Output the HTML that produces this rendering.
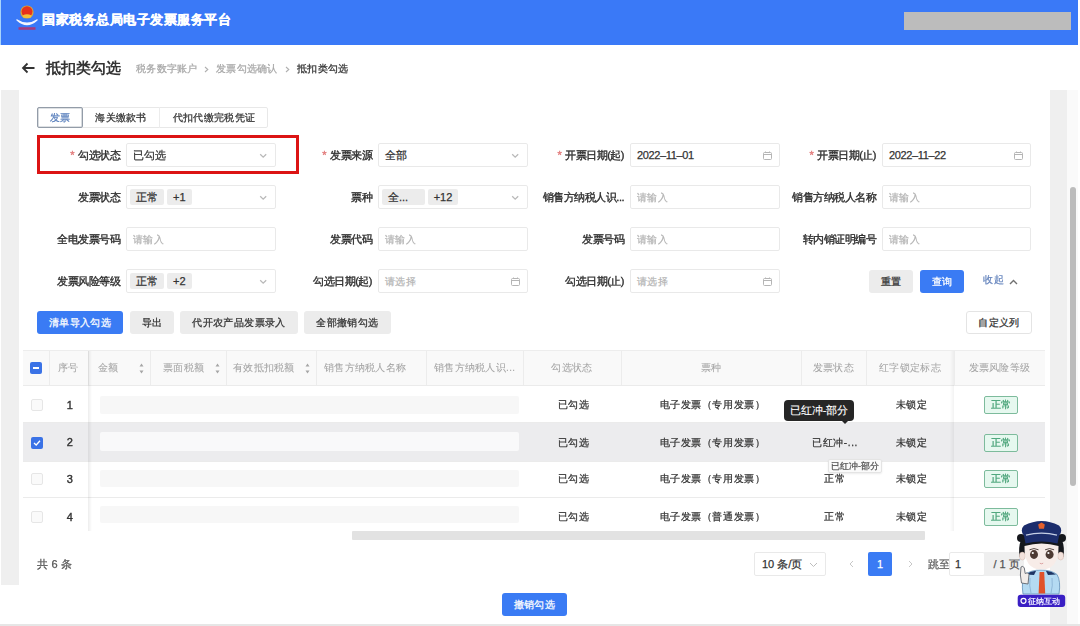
<!DOCTYPE html>
<html><head><meta charset="utf-8">
<style>
*{box-sizing:border-box;margin:0;padding:0}
html,body{width:1080px;height:626px;overflow:hidden;background:#fff;font-family:"Liberation Sans",sans-serif;color:#333;position:relative}
body{-webkit-text-stroke:0.25px}
.a{position:absolute}
.strip{background:#efefef}
.bc{top:62px;font-size:10px;color:#a8a8a8;line-height:13px;white-space:nowrap;letter-spacing:0.3px}
.lbl{font-size:11px;letter-spacing:-0.5px;color:#2e2e2e;-webkit-text-stroke:0.35px;text-align:right;line-height:24px;white-space:nowrap}
.req{color:#e27b7b;margin-right:4px}
.inp{height:24px;border:1px solid #e9e9e9;border-radius:2px;background:#fff;font-size:11px;line-height:22px;padding-left:6px;white-space:nowrap}
.ph{color:#b3b3b3;-webkit-text-stroke:0.2px;font-size:10px;letter-spacing:0.4px}
.tag{display:inline-block;background:#ececec;height:16px;line-height:16px;padding:0 6px;font-size:11px;color:#333;vertical-align:top;margin-top:3px;margin-right:3px;border-radius:2px}
.btn{height:23px;line-height:23px;font-size:10px;letter-spacing:0.4px;text-align:center;border-radius:3px;white-space:nowrap}
.pri{background:#3a7bf4;color:#fff}
.gry{background:#ececec;color:#333}
.th{top:350px;height:36px;line-height:36px;font-size:10px;letter-spacing:0.3px;color:#a3a3a3;white-space:nowrap;-webkit-text-stroke:0.05px}
.td{padding-left:3px;font-size:10px;letter-spacing:0.6px;-webkit-text-stroke:0.25px;color:#333;text-align:center;white-space:nowrap;line-height:14px}
</style></head><body>
<div class="a" style="left:0;top:0;width:1080px;height:626px;overflow:hidden;filter:blur(0.4px)">
<div class="a" style="left:0;top:0;width:1078px;height:45px;background:#3a79f7"></div>
<div class="a" style="left:0;top:0;width:1px;height:45px;background:#a9d4fb"></div>
<svg class="a" style="left:14px;top:3px" width="26" height="31" viewBox="0 0 26 31">
  <circle cx="13" cy="9" r="6.6" fill="#d9a43a"/>
  <circle cx="13" cy="8.6" r="5.4" fill="#e8321c"/>
  <path d="M8.5 12.5 Q13 10 17.5 12.5 L17 14.5 Q13 15.5 9 14.5Z" fill="#f2c23a"/>
  <path d="M2.5 16 Q13 23 23.5 16 L23.5 17.5 Q13 27 2.5 17.5Z" fill="#f4f6ff"/>
  <path d="M4.5 25.5 H21.5" stroke="#b8306a" stroke-width="2.6" opacity="0.85"/>
</svg>
<div class="a" style="left:42px;top:11px;font-size:13px;font-weight:bold;color:#fff;letter-spacing:0.5px;line-height:17px;white-space:nowrap;-webkit-text-stroke:0.3px">国家税务总局电子发票服务平台</div>
<div class="a" style="left:904px;top:12px;width:167px;height:18px;background:#bcbcbc"></div>
<svg class="a" style="left:21px;top:62px" width="15" height="12" viewBox="0 0 15 12"><path d="M13.5 6H2 M6.5 1.5L2 6L6.5 10.5" stroke="#333" stroke-width="1.8" fill="none"/></svg>
<div class="a" style="left:46px;top:58px;font-size:15px;font-weight:bold;color:#333;line-height:20px;-webkit-text-stroke:0">抵扣类勾选</div>
<div class="a bc" style="left:136px">税务数字账户</div>
<svg class="a" style="left:204px;top:66px" width="5" height="7" viewBox="0 0 5 7"><path d="M1 1L3.8 3.5L1 6" stroke="#b0b0b0" stroke-width="1.1" fill="none"/></svg>
<div class="a bc" style="left:216px">发票勾选确认</div>
<svg class="a" style="left:285px;top:66px" width="5" height="7" viewBox="0 0 5 7"><path d="M1 1L3.8 3.5L1 6" stroke="#b0b0b0" stroke-width="1.1" fill="none"/></svg>
<div class="a bc" style="left:297px;color:#333">抵扣类勾选</div>
<div class="a strip" style="left:1px;top:90px;width:18px;height:495px"></div>
<div class="a strip" style="left:1050px;top:90px;width:17px;height:534px"></div>
<div class="a" style="left:1067px;top:90px;width:11px;height:534px;background:#fafafa"></div>
<div class="a" style="left:1070px;top:187px;width:6px;height:299px;background:#bcbcbc;border-radius:3px"></div>
<div class="a" style="left:0;top:624px;width:1080px;height:2px;background:#e6e6e6"></div>
<div class="a" style="left:37px;top:107px;width:231px;height:21px;border:1px solid #e8e8e8;border-radius:2px"></div>
<div class="a" style="left:37px;top:107px;width:46px;height:21px;border:1px solid #939ca8;box-shadow:inset 0 0 0 0.6px rgba(147,156,168,0.6);border-radius:2px;color:#5b80bd;font-size:10px;letter-spacing:0.3px;line-height:19px;text-align:center">发票</div>
<div class="a" style="left:83px;top:107px;width:77px;height:21px;border-right:1px solid #ececec;font-size:10px;letter-spacing:0.3px;line-height:21px;text-align:center;color:#333">海关缴款书</div>
<div class="a" style="left:160px;top:107px;width:108px;height:21px;font-size:10px;letter-spacing:0.3px;line-height:21px;text-align:center;color:#333">代扣代缴完税凭证</div>
<div class="a" style="left:37px;top:135px;width:262px;height:39px;border:3px solid #dc1414"></div>
<div class="a lbl" style="left:0px;top:143px;width:120px"><span class="req">*</span>勾选状态</div>
<div class="a inp" style="left:126px;top:143px;width:150px">已勾选</div>
<svg class="a" style="left:259px;top:153px" width="9" height="6" viewBox="0 0 9 6"><path d="M1.2 1.2L4.2 4.2L7.2 1.2" stroke="#b9b9b9" stroke-width="1.3" fill="none"/></svg>
<div class="a lbl" style="left:252px;top:143px;width:120px"><span class="req">*</span>发票来源</div>
<div class="a inp" style="left:378px;top:143px;width:150px">全部</div>
<svg class="a" style="left:511px;top:153px" width="9" height="6" viewBox="0 0 9 6"><path d="M1.2 1.2L4.2 4.2L7.2 1.2" stroke="#b9b9b9" stroke-width="1.3" fill="none"/></svg>
<div class="a lbl" style="left:504px;top:143px;width:120px"><span class="req">*</span>开票日期(起)</div>
<div class="a inp" style="left:630px;top:143px;width:150px"><span style="letter-spacing:-0.35px">2022–11–01</span></div>
<svg class="a" style="left:763px;top:151px" width="9" height="9" viewBox="0 0 9 9"><rect x="0.5" y="1.5" width="8" height="7" rx="1" stroke="#b5b5b5" fill="none"/><path d="M0.5 3.5H8.5M2.5 0.5V2M6.5 0.5V2" stroke="#b5b5b5"/></svg>
<div class="a lbl" style="left:756px;top:143px;width:120px"><span class="req">*</span>开票日期(止)</div>
<div class="a inp" style="left:882px;top:143px;width:149px"><span style="letter-spacing:-0.35px">2022–11–22</span></div>
<svg class="a" style="left:1014px;top:151px" width="9" height="9" viewBox="0 0 9 9"><rect x="0.5" y="1.5" width="8" height="7" rx="1" stroke="#b5b5b5" fill="none"/><path d="M0.5 3.5H8.5M2.5 0.5V2M6.5 0.5V2" stroke="#b5b5b5"/></svg>
<div class="a lbl" style="left:0px;top:185px;width:120px">发票状态</div>
<div class="a inp" style="left:126px;top:185px;width:150px"><span style="margin-left:-3px"></span><span class="tag">正常</span><span class="tag">+1</span></div>
<svg class="a" style="left:259px;top:195px" width="9" height="6" viewBox="0 0 9 6"><path d="M1.2 1.2L4.2 4.2L7.2 1.2" stroke="#b9b9b9" stroke-width="1.3" fill="none"/></svg>
<div class="a lbl" style="left:252px;top:185px;width:120px">票种</div>
<div class="a inp" style="left:378px;top:185px;width:150px"><span style="margin-left:-3px"></span><span class="tag" style="width:43px;padding-left:6px">全...</span><span class="tag" style="width:30px;text-align:center;padding:0">+12</span></div>
<svg class="a" style="left:511px;top:195px" width="9" height="6" viewBox="0 0 9 6"><path d="M1.2 1.2L4.2 4.2L7.2 1.2" stroke="#b9b9b9" stroke-width="1.3" fill="none"/></svg>
<div class="a lbl" style="left:504px;top:185px;width:120px">销售方纳税人识...</div>
<div class="a inp" style="left:630px;top:185px;width:150px"><span class="ph">请输入</span></div>
<div class="a lbl" style="left:756px;top:185px;width:120px">销售方纳税人名称</div>
<div class="a inp" style="left:882px;top:185px;width:149px"><span class="ph">请输入</span></div>
<div class="a lbl" style="left:0px;top:227px;width:120px">全电发票号码</div>
<div class="a inp" style="left:126px;top:227px;width:150px"><span class="ph">请输入</span></div>
<div class="a lbl" style="left:252px;top:227px;width:120px">发票代码</div>
<div class="a inp" style="left:378px;top:227px;width:150px"><span class="ph">请输入</span></div>
<div class="a lbl" style="left:504px;top:227px;width:120px">发票号码</div>
<div class="a inp" style="left:630px;top:227px;width:150px"><span class="ph">请输入</span></div>
<div class="a lbl" style="left:756px;top:227px;width:120px">转内销证明编号</div>
<div class="a inp" style="left:882px;top:227px;width:149px"><span class="ph">请输入</span></div>
<div class="a lbl" style="left:0px;top:269px;width:120px">发票风险等级</div>
<div class="a inp" style="left:126px;top:269px;width:150px"><span style="margin-left:-3px"></span><span class="tag">正常</span><span class="tag">+2</span></div>
<svg class="a" style="left:259px;top:279px" width="9" height="6" viewBox="0 0 9 6"><path d="M1.2 1.2L4.2 4.2L7.2 1.2" stroke="#b9b9b9" stroke-width="1.3" fill="none"/></svg>
<div class="a lbl" style="left:252px;top:269px;width:120px">勾选日期(起)</div>
<div class="a inp" style="left:378px;top:269px;width:150px"><span class="ph">请选择</span></div>
<svg class="a" style="left:511px;top:277px" width="9" height="9" viewBox="0 0 9 9"><rect x="0.5" y="1.5" width="8" height="7" rx="1" stroke="#b5b5b5" fill="none"/><path d="M0.5 3.5H8.5M2.5 0.5V2M6.5 0.5V2" stroke="#b5b5b5"/></svg>
<div class="a lbl" style="left:504px;top:269px;width:120px">勾选日期(止)</div>
<div class="a inp" style="left:630px;top:269px;width:150px"><span class="ph">请选择</span></div>
<svg class="a" style="left:763px;top:277px" width="9" height="9" viewBox="0 0 9 9"><rect x="0.5" y="1.5" width="8" height="7" rx="1" stroke="#b5b5b5" fill="none"/><path d="M0.5 3.5H8.5M2.5 0.5V2M6.5 0.5V2" stroke="#b5b5b5"/></svg>
<div class="a btn gry" style="left:869px;top:270px;width:44px">重置</div>
<div class="a btn pri" style="left:920px;top:270px;width:44px">查询</div>
<div class="a" style="left:983px;top:273px;font-size:10px;letter-spacing:0.5px;color:#6a88bf;line-height:14px">收起</div>
<svg class="a" style="left:1009px;top:279px" width="9" height="6" viewBox="0 0 9 6"><path d="M1 5L4.5 1.5L8 5" stroke="#707070" stroke-width="1.4" fill="none"/></svg>
<div class="a btn pri" style="left:37px;top:311px;width:86px">清单导入勾选</div>
<div class="a btn gry" style="left:130px;top:311px;width:44px">导出</div>
<div class="a btn gry" style="left:180px;top:311px;width:118px">代开农产品发票录入</div>
<div class="a btn gry" style="left:304px;top:311px;width:87px">全部撤销勾选</div>
<div class="a btn" style="left:966px;top:311px;width:66px;border:1px solid #e4e4e4;background:#fff;line-height:21px">自定义列</div>
<div class="a" style="left:23px;top:350px;width:1022px;height:36px;background:#f9f9f9;border-top:1px solid #ededed;border-bottom:1px solid #ebebeb"></div>
<div class="a" style="left:49px;top:351px;width:1px;height:34px;background:#ececec"></div>
<div class="a" style="left:88px;top:351px;width:1px;height:34px;background:#ececec"></div>
<div class="a" style="left:150px;top:351px;width:1px;height:34px;background:#ececec"></div>
<div class="a" style="left:226px;top:351px;width:1px;height:34px;background:#ececec"></div>
<div class="a" style="left:316px;top:351px;width:1px;height:34px;background:#ececec"></div>
<div class="a" style="left:426px;top:351px;width:1px;height:34px;background:#ececec"></div>
<div class="a" style="left:523px;top:351px;width:1px;height:34px;background:#ececec"></div>
<div class="a" style="left:621px;top:351px;width:1px;height:34px;background:#ececec"></div>
<div class="a" style="left:801px;top:351px;width:1px;height:34px;background:#ececec"></div>
<div class="a" style="left:866px;top:351px;width:1px;height:34px;background:#ececec"></div>
<div class="a" style="left:954px;top:351px;width:1px;height:34px;background:#ececec"></div>
<div class="a" style="left:30px;top:362px;width:12px;height:12px;background:#3a72e6;border-radius:2px"><div class="a" style="left:3px;top:5px;width:6px;height:2px;background:#fff"></div></div>
<div class="a th" style="left:49px;width:39px;text-align:center">序号</div>
<div class="a th" style="left:98px">金额</div>
<svg class="a" style="left:139px;top:363px" width="5" height="11" viewBox="0 0 5 11"><path d="M0.5 3.5L2.5 0.5L4.5 3.5Z M0.5 7.5L2.5 10.5L4.5 7.5Z" fill="#a6a6a6"/></svg>
<div class="a th" style="left:163px">票面税额</div>
<svg class="a" style="left:215px;top:363px" width="5" height="11" viewBox="0 0 5 11"><path d="M0.5 3.5L2.5 0.5L4.5 3.5Z M0.5 7.5L2.5 10.5L4.5 7.5Z" fill="#a6a6a6"/></svg>
<div class="a th" style="left:233px">有效抵扣税额</div>
<svg class="a" style="left:305px;top:363px" width="5" height="11" viewBox="0 0 5 11"><path d="M0.5 3.5L2.5 0.5L4.5 3.5Z M0.5 7.5L2.5 10.5L4.5 7.5Z" fill="#a6a6a6"/></svg>
<div class="a th" style="left:324px">销售方纳税人名称</div>
<div class="a th" style="left:434px">销售方纳税人识...</div>
<div class="a th" style="left:523px;width:98px;text-align:center">勾选状态</div>
<div class="a th" style="left:621px;width:180px;text-align:center">票种</div>
<div class="a th" style="left:801px;width:65px;text-align:center">发票状态</div>
<div class="a th" style="left:866px;width:88px;text-align:center">红字锁定标志</div>
<div class="a th" style="left:954px;width:91px;text-align:center">发票风险等级</div>
<div class="a" style="left:23px;top:422px;width:1022px;height:1px;background:#ebebeb"></div>
<div class="a" style="left:31px;top:399px;width:12px;height:12px;border:1px solid #e6e6e6;border-radius:2px;background:#fafafa"></div>
<div class="a td" style="left:49px;width:39px;top:398px;font-size:11px;-webkit-text-stroke:0.4px;color:#333">1</div>
<div class="a" style="left:100px;top:396px;width:419px;height:18px;background:#f7f7f7;border-radius:2px"></div>
<div class="a td" style="left:523px;width:98px;top:398px">已勾选</div>
<div class="a td" style="left:621px;width:180px;top:398px">电子发票（专用发票）</div>
<div class="a td" style="left:866px;width:88px;top:398px">未锁定</div>
<div class="a" style="left:984px;top:396px;width:34px;height:18px;border:1px solid #7dbb9c;background:#e6f8ef;border-radius:2px;color:#3f9d70;font-size:10px;line-height:16px;text-align:center">正常</div>
<div class="a" style="left:23px;top:423px;width:1022px;height:39px;background:#ececee"></div>
<div class="a" style="left:23px;top:461px;width:1022px;height:1px;background:#ebebeb"></div>
<div class="a" style="left:31px;top:437px;width:12px;height:12px;background:#3a72e6;border-radius:2px"><svg class="a" style="left:2px;top:2px" width="8" height="8" viewBox="0 0 8 8"><path d="M1 4L3.2 6L7 1.8" stroke="#fff" stroke-width="1.3" fill="none"/></svg></div>
<div class="a td" style="left:49px;width:39px;top:435px;font-size:11px;-webkit-text-stroke:0.4px;color:#333">2</div>
<div class="a" style="left:100px;top:432px;width:419px;height:19px;background:#f9f9fa;border-radius:2px"></div>
<div class="a td" style="left:523px;width:98px;top:436px">已勾选</div>
<div class="a td" style="left:621px;width:180px;top:436px">电子发票（专用发票）</div>
<div class="a td" style="left:801px;width:65px;top:436px">已红冲-...</div>
<div class="a td" style="left:866px;width:88px;top:436px">未锁定</div>
<div class="a" style="left:984px;top:434px;width:34px;height:18px;border:1px solid #7dbb9c;background:#e6f8ef;border-radius:2px;color:#3f9d70;font-size:10px;line-height:16px;text-align:center">正常</div>
<div class="a" style="left:23px;top:497px;width:1022px;height:1px;background:#ebebeb"></div>
<div class="a" style="left:31px;top:473px;width:12px;height:12px;border:1px solid #e6e6e6;border-radius:2px;background:#fafafa"></div>
<div class="a td" style="left:49px;width:39px;top:472px;font-size:11px;-webkit-text-stroke:0.4px;color:#333">3</div>
<div class="a" style="left:100px;top:470px;width:419px;height:17px;background:#f7f7f7;border-radius:2px"></div>
<div class="a td" style="left:523px;width:98px;top:472px">已勾选</div>
<div class="a td" style="left:621px;width:180px;top:472px">电子发票（专用发票）</div>
<div class="a td" style="left:801px;width:65px;top:472px">正常</div>
<div class="a td" style="left:866px;width:88px;top:472px">未锁定</div>
<div class="a" style="left:984px;top:470px;width:34px;height:18px;border:1px solid #7dbb9c;background:#e6f8ef;border-radius:2px;color:#3f9d70;font-size:10px;line-height:16px;text-align:center">正常</div>
<div class="a" style="left:31px;top:511px;width:12px;height:12px;border:1px solid #e6e6e6;border-radius:2px;background:#fafafa"></div>
<div class="a td" style="left:49px;width:39px;top:510px;font-size:11px;-webkit-text-stroke:0.4px;color:#333">4</div>
<div class="a" style="left:100px;top:506px;width:419px;height:17px;background:#f7f7f7;border-radius:2px"></div>
<div class="a td" style="left:523px;width:98px;top:510px">已勾选</div>
<div class="a td" style="left:621px;width:180px;top:510px">电子发票（普通发票）</div>
<div class="a td" style="left:801px;width:65px;top:510px">正常</div>
<div class="a td" style="left:866px;width:88px;top:510px">未锁定</div>
<div class="a" style="left:984px;top:508px;width:34px;height:18px;border:1px solid #7dbb9c;background:#e6f8ef;border-radius:2px;color:#3f9d70;font-size:10px;line-height:16px;text-align:center">正常</div>
<div class="a" style="left:88px;top:351px;width:4px;height:180px;background:linear-gradient(to right,rgba(0,0,0,0.07),rgba(0,0,0,0))"></div>
<div class="a" style="left:950px;top:351px;width:4px;height:180px;background:linear-gradient(to left,rgba(0,0,0,0.05),rgba(0,0,0,0))"></div>
<div class="a" style="left:352px;top:531px;width:573px;height:9px;background:#e2e2e2;border-radius:1px"></div>
<div class="a" style="left:784px;top:400px;width:70px;height:21px;background:#262626;border-radius:4px;color:#fff;font-size:11px;line-height:21px;text-align:center;-webkit-text-stroke:0.15px">已红冲-部分</div>
<div class="a" style="left:841px;top:420px;width:0;height:0;border-left:4px solid transparent;border-right:4px solid transparent;border-top:4px solid #262626"></div>
<div class="a" style="left:828px;top:459px;width:54px;height:14px;background:#fafafa;border:1px solid #e4e4e4;border-radius:2px;box-shadow:0 1px 2px rgba(0,0,0,0.08);color:#555;font-size:9px;line-height:12px;text-align:center">已红冲-部分</div>
<div class="a" style="left:37px;top:557px;font-size:11px;color:#555;line-height:14px;word-spacing:0.5px">共 6 条</div>
<div class="a inp" style="left:754px;top:552px;width:72px;height:24px;line-height:22px;padding-left:7px">10 条/页</div>
<svg class="a" style="left:809px;top:562px" width="9" height="6" viewBox="0 0 9 6"><path d="M1 1L4.5 4.5L8 1" stroke="#bdbdbd" stroke-width="1" fill="none"/></svg>
<svg class="a" style="left:849px;top:560px" width="5" height="8" viewBox="0 0 5 8"><path d="M4 1L1 4L4 7" stroke="#c8c8c8" fill="none"/></svg>
<div class="a" style="left:868px;top:552px;width:24px;height:24px;background:#3a7bf4;border-radius:2px;color:#fff;font-size:11px;line-height:24px;text-align:center">1</div>
<svg class="a" style="left:908px;top:560px" width="5" height="8" viewBox="0 0 5 8"><path d="M1 1L4 4L1 7" stroke="#c8c8c8" fill="none"/></svg>
<div class="a" style="left:928px;top:557px;font-size:11px;color:#666;line-height:14px">跳至</div>
<div class="a inp" style="left:949px;top:552px;width:36px;height:24px;line-height:22px;padding-left:5px">1</div>
<div class="a" style="left:984px;top:552px;width:40px;height:24px;background:#efefef;font-size:11px;color:#555;line-height:24px;padding-left:9.5px;white-space:nowrap">/ 1 页</div>
<div class="a btn pri" style="left:502px;top:593px;width:65px;height:23px;line-height:23px">撤销勾选</div>
<svg class="a" style="left:1012px;top:516px" width="60" height="95" viewBox="1012 516 60 95">
  <!-- body -->
  <path d="M1023 594 Q1021 581 1025 574.5 Q1031 570 1041 570 Q1051 570 1057 574.5 Q1061 581 1059 594Z" fill="#b4daf2" stroke="#5f8fb8" stroke-width="0.8"/>
  <path d="M1030 578 Q1029 586 1031 593 M1052 578 Q1053 586 1051 593" stroke="#7fa8cc" stroke-width="0.7" fill="none"/>
  <path d="M1026 574.5 Q1031 570.5 1036 571 L1034 575Z M1056 574.5 Q1051 570.5 1046 571 L1048 575Z" fill="#1e3564"/>
  <path d="M1039.6 572 L1044.2 572 L1045.2 593.5 L1038.6 593.5Z" fill="#e0522a"/>
  <!-- hand -->
  <path d="M1021.5 583 Q1019.5 575 1021 567 Q1023 565 1024.3 568 L1025.2 573.5 Q1027.5 571.5 1029 574.5 L1028 584Z" fill="#f1ece9" stroke="#60656e" stroke-width="0.9"/>
  <!-- hair back -->
  <path d="M1019.5 557 Q1017 537 1030 530 Q1041.5 525 1053 530 Q1066 537 1063.5 557 Q1041.5 546 1019.5 557Z" fill="#15171c"/>
  <circle cx="1021" cy="538" r="4" fill="#15171c"/>
  <circle cx="1062" cy="538" r="4" fill="#15171c"/>
  <!-- ears -->
  <ellipse cx="1022.3" cy="556" rx="3" ry="4" fill="#f3e2dc" stroke="#c9a9a0" stroke-width="0.4"/>
  <ellipse cx="1060.7" cy="556" rx="3" ry="4" fill="#f3e2dc" stroke="#c9a9a0" stroke-width="0.4"/>
  <!-- face -->
  <path d="M1024.5 546 Q1024 569.5 1041.5 569.5 Q1059 569.5 1058.5 546 Q1041.5 541 1024.5 546Z" fill="#f7ece8"/>
  <!-- eyes -->
  <ellipse cx="1034" cy="554.5" rx="4" ry="4.4" fill="#4e3a33"/>
  <ellipse cx="1049.6" cy="554.5" rx="4" ry="4.4" fill="#4e3a33"/>
  <circle cx="1032.8" cy="553" r="1.1" fill="#fff"/>
  <circle cx="1048.4" cy="553" r="1.1" fill="#fff"/>
  <path d="M1029.5 549.8 Q1034 547.3 1038.5 549.8 M1045.1 549.8 Q1049.6 547.3 1054.1 549.8" stroke="#2e211d" stroke-width="0.8" fill="none"/>
  <path d="M1039.8 563.2 Q1041.5 564.4 1043.2 563.2" stroke="#d48f8f" stroke-width="0.8" fill="none"/>
  <!-- hat -->
  <path d="M1025.5 543.5 L1024 536 Q1019.5 530 1024 525.5 Q1041.5 516.5 1059 525.5 Q1063.5 530 1059 536 L1057.5 543.5 Q1041.5 539.5 1025.5 543.5Z" fill="#1c2d6c"/>
  <path d="M1026 535.2 Q1041.5 531 1057 535.2" stroke="#c7d0e6" stroke-width="1.3" fill="none"/>
  <path d="M1041.5 522.4 L1044.8 524.6 L1044 528.8 L1039 528.8 L1038.2 524.6Z" fill="#e4602c"/>
  <!-- badge -->
  <rect x="1017.7" y="594.7" width="47.5" height="12.3" rx="3" fill="#3a1fc4"/>
  <circle cx="1023.5" cy="600.8" r="2.5" stroke="#fff" stroke-width="1.2" fill="none"/>
  <text x="1028" y="604.3" font-size="8.3" fill="#eeeeff" font-family="Liberation Sans, sans-serif" font-weight="bold" style="-webkit-text-stroke:0">征纳互动</text>
</svg>

</div>
</body></html>
